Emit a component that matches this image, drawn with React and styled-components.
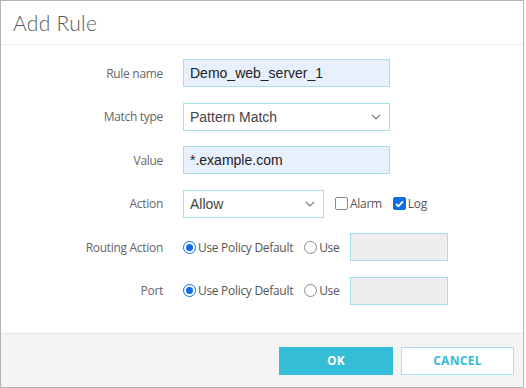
import React from 'react';
import styled, {createGlobalStyle} from 'styled-components';

const GlobalStyle = createGlobalStyle`
  html, body {
    margin: 0;
    padding: 0;
    background: #fff;
  }
  * {
    box-sizing: border-box;
  }
`;

const Dialog = styled.div`
  width: 524px;
  height: 388px;
  border: 1px solid #b4b4b4;
  display: flex;
  flex-direction: column;
  background: #fff;
  font-family: 'Open Sans', sans-serif;
`;

const Header = styled.div`
  height: 44px;
  padding: 0 12px;
  display: flex;
  align-items: center;
  border-bottom: 1px solid #ececec;
`;

const Title = styled.h1`
  margin: 0;
  font-family: Lato, sans-serif;
  font-weight: 300;
  font-size: 21px;
  color: #5a5a5a;
  letter-spacing: 0.3px;
`;

const Body = styled.div`
  flex: 1;
  padding: 14px 0 0 0;
  display: grid;
  grid-template-columns: 162px auto;
  column-gap: 20px;
  row-gap: 15.6px;
  align-content: start;
  align-items: center;
`;

const Label = styled.label`
  text-align: right;
  font-size: 12px;
  letter-spacing: -0.3px;
  color: #666;
`;

const Controls = styled.div`
  display: flex;
  align-items: center;
  height: 28px;
`;

const TextInput = styled.div`
  width: ${({$w}) => $w}px;
  height: 28px;
  border: 1px solid #a6dfea;
  background: ${({$bg}) => $bg || '#e8f0fe'};
  padding: 0 6px;
  display: flex;
  align-items: center;
  font-family: 'Liberation Sans', Arial, sans-serif;
  font-size: 14px;
  color: #222;
`;

const Select = styled(TextInput)`
  justify-content: space-between;
  background: #fff;
  color: #444;
  padding-right: 8px;
`;

const Chevron = () => (
  <svg width="10" height="6" viewBox="0 0 10 6">
    <path d="M1 1l4 4 4-4" fill="none" stroke="#777" strokeWidth="1.1" />
  </svg>
);

const Check = styled.span`
  display: flex;
  align-items: center;
  gap: 2px;
  margin-left: ${({$ml}) => $ml}px;
  font-size: 12px;
  letter-spacing: -0.3px;
  color: #555;
`;

const Box = styled.span`
  width: 13px;
  height: 13px;
  border-radius: 2px;
  border: 1px solid ${({$on}) => ($on ? '#0b6ee6' : '#8a8a8a')};
  background: ${({$on}) => ($on ? '#0b6ee6' : '#fff')};
  display: flex;
  align-items: center;
  justify-content: center;
`;

const Radio = styled.span`
  width: 13px;
  height: 13px;
  border-radius: 50%;
  border: 1px solid ${({$on}) => ($on ? '#0b6ee6' : '#8a8a8a')};
  background: #fff;
  display: flex;
  align-items: center;
  justify-content: center;
  &::after {
    content: '';
    width: 7px;
    height: 7px;
    border-radius: 50%;
    background: ${({$on}) => ($on ? '#0b6ee6' : 'transparent')};
  }
`;

const GrayInput = styled(TextInput)`
  background: #eeeeee;
  margin-left: 11px;
`;

const Footer = styled.div`
  height: 54px;
  background: #f4f4f4;
  border-top: 1px solid #e4e4e4;
  display: flex;
  justify-content: flex-end;
  align-items: center;
  gap: 8px;
  padding-right: 9px;
`;

const Button = styled.button`
  width: ${({$w}) => $w}px;
  height: 28px;
  font-family: 'Open Sans', sans-serif;
  font-weight: 700;
  font-size: 12px;
  letter-spacing: 0.3px;
  border: 1px solid ${({$primary}) => ($primary ? '#35bcd6' : '#a6e0ea')};
  background: ${({$primary}) => ($primary ? '#35bcd6' : '#fff')};
  color: ${({$primary}) => ($primary ? '#fff' : '#35bcd6')};
  padding: 0;
`;

const CheckOption = ({on, label, ml}) => (
  <Check $ml={ml}>
    <Box $on={on}>
      {on && (
        <svg width="9" height="8" viewBox="0 0 9 8">
          <path d="M1 4l2.3 2.3L8 1.3" fill="none" stroke="#fff" strokeWidth="1.8" />
        </svg>
      )}
    </Box>
    {label}
  </Check>
);

const RadioOption = ({on, label, ml}) => (
  <Check $ml={ml}>
    <Radio $on={on} />
    {label}
  </Check>
);

export default function App() {
  return (
    <>
      <GlobalStyle />
      <Dialog>
        <Header>
          <Title>Add Rule</Title>
        </Header>
        <Body>
          <Label>Rule name</Label>
          <Controls>
            <TextInput $w={207}>Demo_web_server_1</TextInput>
          </Controls>

          <Label>Match type</Label>
          <Controls>
            <Select $w={207}>
              Pattern Match
              <Chevron />
            </Select>
          </Controls>

          <Label>Value</Label>
          <Controls>
            <TextInput $w={207}>*.example.com</TextInput>
          </Controls>

          <Label>Action</Label>
          <Controls>
            <Select $w={141}>
              Allow
              <Chevron />
            </Select>
            <CheckOption label="Alarm" ml={11} />
            <CheckOption on label="Log" ml={11} />
          </Controls>

          <Label>Routing Action</Label>
          <Controls>
            <RadioOption on label="Use Policy Default" ml={0} />
            <RadioOption label="Use" ml={11} />
            <GrayInput $w={98} />
          </Controls>

          <Label>Port</Label>
          <Controls>
            <RadioOption on label="Use Policy Default" ml={0} />
            <RadioOption label="Use" ml={11} />
            <GrayInput $w={98} />
          </Controls>
        </Body>
        <Footer>
          <Button $primary $w={114}>OK</Button>
          <Button $w={113}>CANCEL</Button>
        </Footer>
      </Dialog>
    </>
  );
}
